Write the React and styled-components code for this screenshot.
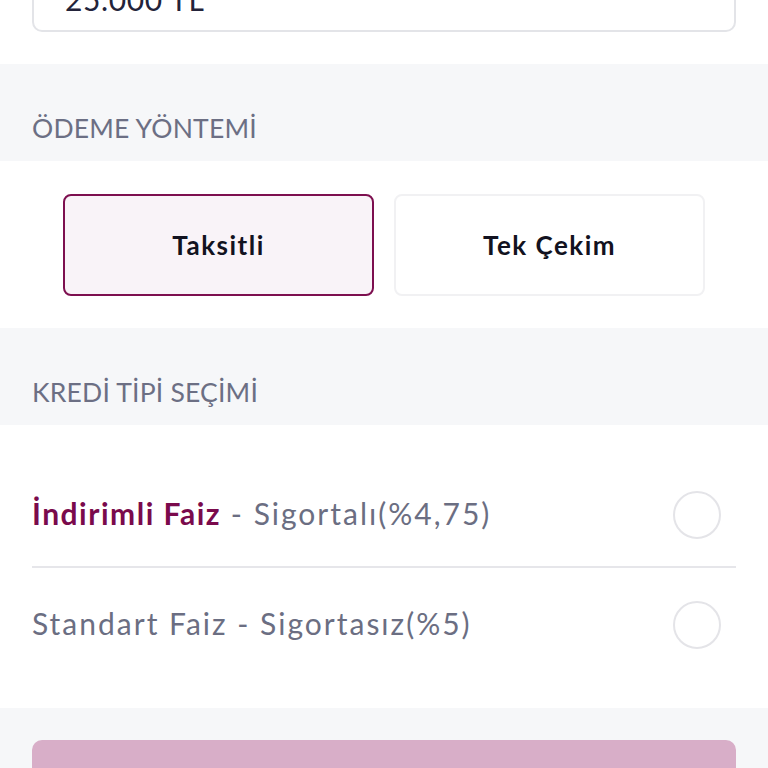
import { useState } from "react";
import styled, { createGlobalStyle } from "styled-components";

const GlobalStyle = createGlobalStyle`
  body {
    margin: 0;
    background: #ffffff;
    font-family: Lato, "Noto Sans", sans-serif;
    overflow: hidden;
  }
`;

function App() {
  const [method, setMethod] = useState("taksitli");
  const [loanType, setLoanType] = useState(null);

  return (
    <StPage>
      <GlobalStyle />
      <StAmountSection>
        <StAmountBox>25.000 TL</StAmountBox>
      </StAmountSection>

      <StSectionTitle>ÖDEME YÖNTEMİ</StSectionTitle>
      <StMethodSection>
        <StMethodButton
          $active={method === "taksitli"}
          onClick={() => setMethod("taksitli")}
        >
          Taksitli
        </StMethodButton>
        <StMethodButton
          $active={method === "tek"}
          onClick={() => setMethod("tek")}
        >
          Tek Çekim
        </StMethodButton>
      </StMethodSection>

      <StSectionTitle>KREDİ TİPİ SEÇİMİ</StSectionTitle>
      <StOptionList>
        <StOption onClick={() => setLoanType("indirimli")}>
          <StOptionText>
            <StHighlight>İndirimli Faiz</StHighlight> - Sigortalı(%4,75)
          </StOptionText>
          <StRadio $checked={loanType === "indirimli"} />
        </StOption>
        <StOption onClick={() => setLoanType("standart")}>
          <StOptionText>Standart Faiz - Sigortasız(%5)</StOptionText>
          <StRadio $checked={loanType === "standart"} />
        </StOption>
      </StOptionList>

      <StFooter>
        <StSubmitButton disabled>Devam</StSubmitButton>
      </StFooter>
    </StPage>
  );
}

export default App;

const StPage = styled.div`
  display: flex;
  flex-direction: column;
`;

const StAmountSection = styled.div`
  background: #ffffff;
  padding: 0 32px;
  height: 64px;
`;

const StAmountBox = styled.div`
  margin-top: -40px;
  height: 72px;
  box-sizing: border-box;
  border: 2px solid #e3e4e8;
  border-radius: 10px;
  display: flex;
  align-items: center;
  padding: 6px 31px 0;
  font-size: 30px;
  letter-spacing: 0.6px;
  color: #23233a;
`;

const StSectionTitle = styled.div`
  background: #f6f7f9;
  height: 97px;
  box-sizing: border-box;
  padding: 31px 32px 0;
  display: flex;
  align-items: center;
  font-size: 26.5px;
  letter-spacing: 0.2px;
  color: #6c6f84;
`;

const StMethodSection = styled.div`
  display: grid;
  grid-template-columns: 311px 311px;
  justify-content: center;
  gap: 20px;
  padding: 33px 0 32px;
`;

const StMethodButton = styled.button`
  height: 102px;
  border-radius: 8px;
  border: 2px solid ${(p) => (p.$active ? "#7d0f4f" : "#f1f1f3")};
  background: ${(p) => (p.$active ? "#f9f3f8" : "#ffffff")};
  font-family: Lato, "Noto Sans", sans-serif;
  font-size: 26px;
  font-weight: 700;
  letter-spacing: 1.5px;
  color: #121220;
  cursor: pointer;
`;

const StOptionList = styled.div`
  padding: 33px 32px 32px;
`;

const StOption = styled.div`
  display: flex;
  align-items: center;
  justify-content: space-between;
  padding: 33px 0 27px;
  cursor: pointer;

  &:not(:last-child) {
    border-bottom: 2px solid #e6e6ea;
  }
`;

const StOptionText = styled.span`
  display: inline-block;
  padding-bottom: 4px;
  font-size: 30px;
  letter-spacing: 2px;
  color: #6b6e82;
`;

const StHighlight = styled.span`
  font-weight: 700;
  letter-spacing: 1.5px;
  color: #7a0a4c;
`;

const StRadio = styled.span`
  width: 48px;
  height: 48px;
  box-sizing: border-box;
  margin-right: 15px;
  border-radius: 50%;
  border: 2px solid ${(p) => (p.$checked ? "#7d0f4f" : "#e4e4e8")};
`;

const StFooter = styled.div`
  background: #f6f7f9;
  padding: 32px;
`;

const StSubmitButton = styled.button`
  width: 100%;
  height: 96px;
  border: none;
  border-radius: 10px;
  background: #d8aec8;
  color: #ffffff;
  font-family: Lato, "Noto Sans", sans-serif;
  font-size: 28px;
  font-weight: 700;
`;
